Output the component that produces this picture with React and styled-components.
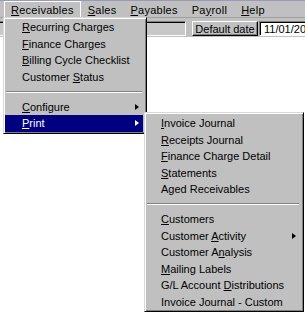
import React from "react";
import styled, { createGlobalStyle } from "styled-components";

const Global = createGlobalStyle`
  html, body { margin: 0; padding: 0; background: #fff; overflow: hidden; }
  body { font-family: "Liberation Sans", Arial, sans-serif; font-size: 11px; color: #000; }
`;

const Screen = styled.div`
  position: relative;
  width: 305px;
  height: 312px;
  overflow: hidden;
  background: #fff;
  display: flex;
  flex-direction: column;
`;

const MenuBar = styled.div`
  display: flex;
  align-items: stretch;
  height: 16px;
  padding-left: 4px;
  background: #c0c0c0;
  border-top: 1px solid #9a9ab8;
`;

const MenuTitle = styled.div`
  display: flex;
  align-items: center;
  padding: 0 6px;
  letter-spacing: 0.25px;
  box-sizing: border-box;
  border: 1px solid ${(p) => (p.$open ? "#fff" : "transparent")};
  border-bottom: none;
`;

const U = styled.span`
  text-decoration: underline;
  text-underline-offset: 1px;
`;

const Toolbar = styled.div`
  display: flex;
  align-items: stretch;
  background: #c0c0c0;
  padding: 3px 0 1px;
  height: 15px;
  border-top: 1px solid #a0a0a0;
`;

const Field = styled.div`
  width: ${(p) => p.$w}px;
  margin-left: ${(p) => p.$ml || 0}px;
  box-sizing: border-box;
  background: ${(p) => p.$bg};
  border-top: 1px solid #808080;
  border-left: 1px solid #808080;
  border-bottom: 1px solid #fff;
  border-right: 1px solid #fff;
  box-shadow: inset 1px 1px 0 #000;
  display: flex;
  align-items: center;
  padding-left: 4px;
  flex-shrink: 0;
  white-space: nowrap;
  overflow: hidden;
`;

const Button = styled.div`
  width: 66px;
  margin-left: 6px;
  box-sizing: border-box;
  border-top: 1px solid #fff;
  border-left: 1px solid #fff;
  border-right: 1px solid #000;
  border-bottom: 1px solid #000;
  box-shadow: inset -1px -1px 0 #808080;
  display: flex;
  align-items: center;
  justify-content: center;
  flex-shrink: 0;
`;

const Content = styled.div`
  flex: 1;
  background: #fff;
`;

const Menu = styled.div`
  position: absolute;
  left: ${(p) => p.$x}px;
  top: ${(p) => p.$y}px;
  width: ${(p) => p.$w}px;
  box-sizing: border-box;
  background: #c0c0c0;
  border-top: 1px solid #d8d8d8;
  border-left: 1px solid #d8d8d8;
  border-right: 1px solid #000;
  border-bottom: 1px solid #000;
  box-shadow: inset 1px 1px 0 #fff, inset -1px -1px 0 #808080;
  padding: ${(p) => p.$pt}px 3px 1px 1px;
`;

const Item = styled.div`
  display: flex;
  align-items: center;
  height: 16.5px;
  padding-left: ${(p) => p.$indent}px;
  padding-right: 4px;
  white-space: nowrap;
  background: ${(p) => (p.$active ? "#000080" : "transparent")};
  color: ${(p) => (p.$active ? "#fff" : "#000")};
`;

const Arrow = styled.span`
  margin-left: auto;
  width: 0;
  height: 0;
  border-top: 3.5px solid transparent;
  border-bottom: 3.5px solid transparent;
  border-left: 4px solid ${(p) => (p.$active ? "#fff" : "#000")};
`;

const Separator = styled.div`
  height: 13.5px;
  display: flex;
  flex-direction: column;
  justify-content: center;
  padding: 0 1px;
  &::before {
    content: "";
    display: block;
    height: 1px;
    background: #808080;
  }
  &::after {
    content: "";
    display: block;
    height: 1px;
    background: #fff;
  }
`;

function Label({ text, m }) {
  if (m === undefined || m < 0) return <span>{text}</span>;
  return (
    <span>
      {text.slice(0, m)}
      <U>{text[m]}</U>
      {text.slice(m + 1)}
    </span>
  );
}

const titles = [
  { t: "Receivables", m: 0, open: true },
  { t: "Sales", m: 0 },
  { t: "Payables", m: 0 },
  { t: "Payroll", m: 2 },
  { t: "Help", m: 0 },
];

const mainMenu = [
  { t: "Recurring Charges", m: 0 },
  { t: "Finance Charges", m: 0 },
  { t: "Billing Cycle Checklist", m: 0 },
  { t: "Customer Status", m: 9 },
  { sep: true },
  { t: "Configure", m: 0, sub: true },
  { t: "Print", m: 0, sub: true, active: true },
];

const printMenu = [
  { t: "Invoice Journal", m: 0 },
  { t: "Receipts Journal", m: 0 },
  { t: "Finance Charge Detail", m: 0 },
  { t: "Statements", m: 0 },
  { t: "Aged Receivables", m: -1 },
  { sep: true },
  { t: "Customers", m: 0 },
  { t: "Customer Activity", m: 9, sub: true },
  { t: "Customer Analysis", m: 10 },
  { t: "Mailing Labels", m: 0 },
  { t: "G/L Account Distributions", m: 12 },
  { t: "Invoice Journal - Custom", m: -1 },
];

function MenuList({ items, indent }) {
  return items.map((it, i) =>
    it.sep ? (
      <Separator key={i} />
    ) : (
      <Item key={i} $indent={indent} $active={it.active}>
        <Label text={it.t} m={it.m} />
        {it.sub && <Arrow $active={it.active} />}
      </Item>
    )
  );
}

export default function App() {
  return (
    <>
      <Global />
      <Screen>
        <MenuBar>
          {titles.map((x) => (
            <MenuTitle key={x.t} $open={x.open}>
              <Label text={x.t} m={x.m} />
            </MenuTitle>
          ))}
        </MenuBar>
        <Toolbar>
          <Field $w={188} $ml={-2} $bg="#c8c8c8" />
          <Button>Default date</Button>
          <Field $w={70} $ml={1} $bg="#fff">11/01/2001</Field>
        </Toolbar>
        <Content />
        <Menu $x={3} $y={17} $w={144} $pt={1}>
          <MenuList items={mainMenu} indent={17} />
        </Menu>
        <Menu $x={144} $y={112} $w={160} $pt={2}>
          <MenuList items={printMenu} indent={15} />
        </Menu>
      </Screen>
    </>
  );
}
